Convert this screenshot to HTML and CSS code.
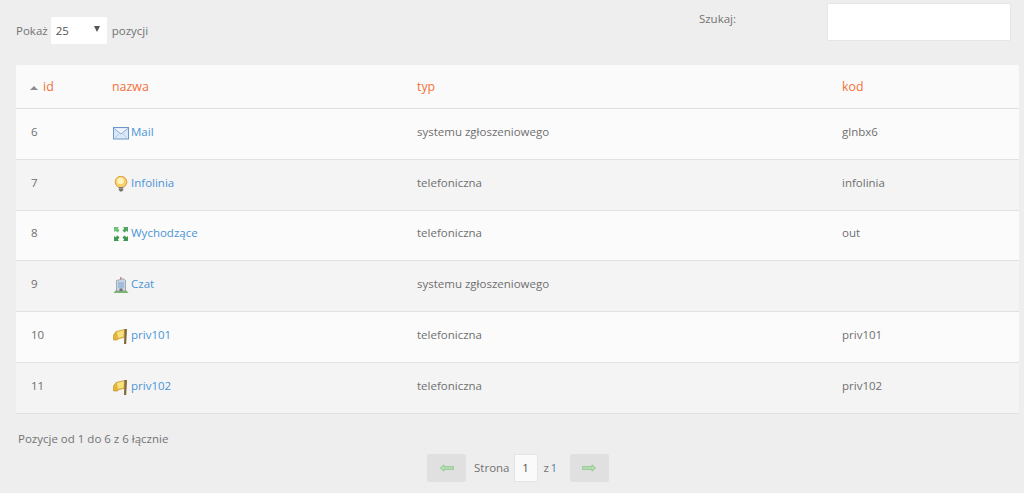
FILE: index.html
```html
<!DOCTYPE html>
<html lang="pl">
<head>
<meta charset="utf-8">
<title>Kanały</title>
<link rel="stylesheet" href="styles.css">
</head>
<body>
<div class="topbar">
  <label class="length">Pokaż <span class="select"><span>25</span><i class="caret"></i></span> pozycji</label>
  <label class="search"><span class="search-label">Szukaj:</span><span class="search-input"></span></label>
</div>
<table class="data">
  <colgroup><col class="c1"><col class="c2"><col class="c3"><col class="c4"></colgroup>
  <thead>
    <tr><th><i class="sort"></i>id</th><th>nazwa</th><th>typ</th><th>kod</th></tr>
  </thead>
  <tbody>
    <tr>
      <td>6</td>
      <td><svg class="ico" viewBox="0 0 16 16"><rect x="0.5" y="2.5" width="15" height="11.500" fill="#dbe8f8" stroke="#6f97c9"/><path d="M1 3.500l7 5.500 7-5.500" fill="#eef4fc" stroke="#8fb0da"/><path d="M1.500 13.500l5-5M14.500 13.500l-5-5" fill="none" stroke="#b3cbe8"/></svg><a href="#">Mail</a></td>
      <td>systemu zgłoszeniowego</td><td>glnbx6</td>
    </tr>
    <tr>
      <td>7</td>
      <td><svg class="ico" viewBox="0 0 16 16"><circle cx="8" cy="6" r="5.800" fill="#f9cf6b" stroke="#d99a35" stroke-width="0.9"/><circle cx="7.500" cy="5" r="3.300" fill="#fdf3bd"/><path d="M5.800 11h4.400v3L9 15.500H7L5.800 14z" fill="#77736a"/><path d="M6 12.500h4" stroke="#b5b1a6" stroke-width="0.7"/></svg><a href="#">Infolinia</a></td>
      <td>telefoniczna</td><td>infolinia</td>
    </tr>
    <tr>
      <td>8</td>
      <td><svg class="ico" viewBox="0 0 16 16"><path d="M1 1h5L4.800 2.500 6.500 4.500 4.500 6.500 2.500 4.800 1 6z" fill="#6fc07a"/><path d="M15 1h-5l1.200 1.500L9.500 4.500l2 2 2-1.700L15 6z" fill="#4fa65c"/><path d="M1 15h5l-1.200-1.500 1.700-2-2-2-2 1.700L1 10z" fill="#3f9a50"/><path d="M15 15h-5l1.200-1.500-1.700-2 2-2 2 1.700L15 10z" fill="#3f9a50"/></svg><a href="#">Wychodzące</a></td>
      <td>telefoniczna</td><td>out</td>
    </tr>
    <tr>
      <td>9</td>
      <td><svg class="ico" viewBox="0 0 16 16"><path d="M0.500 16l2-2.500h11l2 2.500z" fill="#7db56a"/><path d="M3.500 3.500L10.500 1.800 12.500 3.500V14H3.500z" fill="#c9d6e6" stroke="#87929e" stroke-width="0.7"/><path d="M5 6h6M5 8h6M5 10h6" stroke="#7fa2cc"/><rect x="7" y="0" width="1.600" height="2.500" fill="#d08a80"/><rect x="6.500" y="11.500" width="3" height="2.500" fill="#6f6f6f"/></svg><a href="#">Czat</a></td>
      <td>systemu zgłoszeniowego</td><td></td>
    </tr>
    <tr>
      <td>10</td>
      <td><svg class="ico" viewBox="0 0 16 16"><path d="M0.500 7L3 3.500l8.500-2-.5 8-5 1-1.500 1.500H0.500z" fill="#e2b63a" stroke="#c08f22" stroke-width="0.6"/><path d="M4 4l7-1.700-.5 6.500-5.500 1z" fill="#f6e27e"/><path d="M11.500 1h2.500l-.8 15h-2.200z" fill="#85693a"/></svg><a href="#">priv101</a></td>
      <td>telefoniczna</td><td>priv101</td>
    </tr>
    <tr>
      <td>11</td>
      <td><svg class="ico" viewBox="0 0 16 16"><path d="M0.500 7L3 3.500l8.500-2-.5 8-5 1-1.500 1.500H0.500z" fill="#e2b63a" stroke="#c08f22" stroke-width="0.6"/><path d="M4 4l7-1.700-.5 6.500-5.500 1z" fill="#f6e27e"/><path d="M11.500 1h2.500l-.8 15h-2.200z" fill="#85693a"/></svg><a href="#">priv102</a></td>
      <td>telefoniczna</td><td>priv102</td>
    </tr>
  </tbody>
</table>
<div class="info">Pozycje od 1 do 6 z 6 łącznie</div>
<div class="pager">
  <span class="pbtn"><svg class="arrow" viewBox="0 0 14 8"><path d="M0.300 4L4 .8V2.600H13.700v2.800H4V7.200z" fill="#b3e0ae" stroke="#7fb97d" stroke-width="0.6"/></svg></span>
  <span class="ptext ptext-page">Strona</span>
  <span class="pinput">1</span>
  <span class="ptext ptext-of">z <span class="ptotal">1</span></span>
  <span class="pbtn"><svg class="arrow" viewBox="0 0 14 8"><path d="M13.700 4L10 .8V2.600H.3v2.800H10V7.200z" fill="#b3e0ae" stroke="#7fb97d" stroke-width="0.6"/></svg></span>
</div>
</body>
</html>
```
FILE: styles.css
```css
* { box-sizing: border-box; }
html, body { margin: 0; padding: 0; }
body {
  background: #eeeeee;
  color: #737373;
  font-family: "Open Sans", sans-serif;
  font-size: 11.5px;
  line-height: 15px;
  height: 493px;
  overflow: hidden;
}
.topbar {
  display: flex;
  justify-content: space-between;
  align-items: flex-start;
  height: 65px;
  padding: 3px 13px 0 16px;
}
.length {
  display: flex;
  align-items: center;
  gap: 3px;
  margin-top: 13px;
  height: 28px;
}
.select {
  display: flex;
  align-items: center;
  justify-content: space-between;
  width: 56px;
  height: 27px;
  padding: 0 4px 0 5px;
  background: #fff;
  border-radius: 2px;
  color: #555;
  margin-right: 2px;
}
.caret {
  width: 0;
  height: 0;
  border-left: 3px solid transparent;
  border-right: 3px solid transparent;
  border-top: 6px solid #555;
  margin-right: 3px;
  margin-bottom: 2px;
}
.search { display: flex; align-items: flex-start; }
.search-label { margin: 8px 91px 0 0; }
.search-input {
  display: block;
  width: 184px;
  height: 38px;
  background: #fff;
  border: 1px solid #e6e6e6;
  border-radius: 2px;
}
.data {
  width: 1003px;
  margin-left: 16px;
  border-collapse: separate;
  border-spacing: 0;
  table-layout: fixed;
  background: #fff;
  border-radius: 3px 3px 0 0;
}
.c1 { width: 82px; }
.c2 { width: 304px; }
.c3 { width: 425px; }
.data th {
  height: 44px;
  padding: 0 0 0 15px;
  font-size: 12.4px;
  font-weight: 400;
  text-align: left;
  color: #f4703a;
  background: #fafafa;
  border-bottom: 1px solid #dfdfdf;
}
.data th:nth-child(2) { padding-left: 14px; }
.data th:first-child { border-top-left-radius: 3px; padding-left: 14px; }
.data th:last-child { border-top-right-radius: 3px; }
.sort {
  display: inline-block;
  width: 0;
  height: 0;
  margin-right: 5px;
  border-left: 4px solid transparent;
  border-right: 4px solid transparent;
  border-bottom: 4px solid #8c8c8c;
  vertical-align: 1px;
}
.data td {
  height: 50.8px;
  padding: 0 0 5px 15px;
  vertical-align: middle;
  background: #fbfbfb;
  border-bottom: 1px solid #e1e1e1;
  color: #6f6f6f;
}
.data td:nth-child(2) { padding-bottom: 3px; }
.data tr:nth-child(even) td { background: #f4f4f4; }
.ico {
  width: 16px;
  height: 16px;
  margin-right: 2px;
  vertical-align: -5px;
}
.data td a { color: #4a95d6; text-decoration: none; }
.info { margin: 17px 0 0 18px; }
.pager {
  display: flex;
  align-items: center;
  justify-content: center;
  margin-top: 8px;
  height: 28px;
  width: 1036px;
}
.pbtn {
  display: flex;
  align-items: center;
  justify-content: center;
  width: 39px;
  height: 28px;
  background: #e0e0e0;
  border-radius: 2px;
}
.arrow { width: 14px; height: 8px; }
.ptext-page { margin: 0 4px 0 8px; }
.ptext-of { margin: 0 13px 0 6px; word-spacing: -1.5px; }
.pinput {
  display: flex;
  align-items: center;
  justify-content: center;
  width: 24px;
  height: 28px;
  background: #fafafa;
  border: 1px solid #e4e4e4;
  color: #555;
}
.ptotal { color: #5a7fa8; }
```
